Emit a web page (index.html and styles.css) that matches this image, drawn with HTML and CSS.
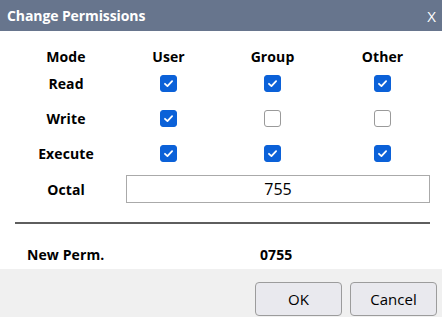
FILE: index.html
```html
<!DOCTYPE html>
<html>
<head>
<meta charset="utf-8">
<link rel="stylesheet" href="styles.css">
</head>
<body>
<div class="dialog">
  <div class="titlebar">
    <span class="title">Change Permissions</span>
    <span class="close">X</span>
  </div>
  <div class="content">
    <div class="grid">
      <div class="cell head">Mode</div>
      <div class="cell head">User</div>
      <div class="cell head">Group</div>
      <div class="cell head">Other</div>

      <div class="cell label">Read</div>
      <div class="cell"><span class="cb on"><svg viewBox="0 0 17 17"><path d="M4.5 8.8 L7.3 11.5 L12.6 5.8" /></svg></span></div>
      <div class="cell"><span class="cb on"><svg viewBox="0 0 17 17"><path d="M4.5 8.8 L7.3 11.5 L12.6 5.8" /></svg></span></div>
      <div class="cell"><span class="cb on"><svg viewBox="0 0 17 17"><path d="M4.5 8.8 L7.3 11.5 L12.6 5.8" /></svg></span></div>

      <div class="cell label">Write</div>
      <div class="cell"><span class="cb on"><svg viewBox="0 0 17 17"><path d="M4.5 8.8 L7.3 11.5 L12.6 5.8" /></svg></span></div>
      <div class="cell"><span class="cb"></span></div>
      <div class="cell"><span class="cb"></span></div>

      <div class="cell label">Execute</div>
      <div class="cell"><span class="cb on"><svg viewBox="0 0 17 17"><path d="M4.5 8.8 L7.3 11.5 L12.6 5.8" /></svg></span></div>
      <div class="cell"><span class="cb on"><svg viewBox="0 0 17 17"><path d="M4.5 8.8 L7.3 11.5 L12.6 5.8" /></svg></span></div>
      <div class="cell"><span class="cb on"><svg viewBox="0 0 17 17"><path d="M4.5 8.8 L7.3 11.5 L12.6 5.8" /></svg></span></div>

      <div class="cell label">Octal</div>
      <div class="octal-field"><div class="input">755</div></div>
    </div>
    <div class="rule"></div>
    <div class="result">
      <span class="result-label">New Perm.</span>
      <span class="result-value">0755</span>
    </div>
  </div>
  <div class="footer">
    <button class="btn">OK</button>
    <button class="btn">Cancel</button>
  </div>
</div>
</body>
</html>
```
FILE: styles.css
```css
html, body {
  margin: 0;
  padding: 0;
  background: #ffffff;
}
body {
  font-family: "Open Sans", "Noto Sans", sans-serif;
  color: #000;
  width: 442px;
  height: 317px;
  overflow: hidden;
}
.dialog {
  display: flex;
  flex-direction: column;
  height: 317px;
}
.titlebar {
  height: 31px;
  flex: none;
  background: #67758d;
  color: #fff;
  display: flex;
  align-items: center;
  justify-content: space-between;
  padding: 0 6px 0 7px;
}
.title {
  font-weight: 700;
  font-size: 14px;
  letter-spacing: -0.1px;
}
.close {
  font-size: 15px;
  font-weight: 400;
}
.content {
  flex: none;
  height: 238px;
  box-sizing: border-box;
  padding: 13px 12px 0 15px;
}
.grid {
  display: grid;
  grid-template-columns: 102px 103px 105px 115px;
  grid-template-rows: 24px 30px 40px 30px 42px;
  align-items: center;
}
.cell {
  display: flex;
  justify-content: center;
  align-items: center;
}
.head, .label {
  font-weight: 700;
  font-size: 14px;
  letter-spacing: 0.1px;
}
.cb {
  width: 15px;
  height: 15px;
  border: 1px solid #9a9a9a;
  border-radius: 3px;
  background: #fff;
  display: flex;
}
.cb.on {
  background: #0b61d8;
  border-color: #0b61d8;
}
.cb svg {
  width: 15px;
  height: 15px;
}
.cb path {
  fill: none;
  stroke: #fff;
  stroke-width: 2;
  stroke-linecap: round;
  stroke-linejoin: round;
}
.octal-field {
  grid-column: 2 / 5;
  padding-left: 9px;
}
.input {
  height: 26px;
  border: 1px solid #aaaaaa;
  display: flex;
  align-items: center;
  justify-content: center;
  font-size: 16px;
  width: 302px;
}
.rule {
  height: 2px;
  margin-top: 12px;
  width: 415px;
  background: #5e5e5e;
}
.result {
  display: flex;
  align-items: center;
  height: 30px;
  padding-top: 15px;
  font-weight: 700;
  font-size: 14px;
  letter-spacing: 0.1px;
}
.result-label {
  width: 102px;
  padding-left: 12px;
  box-sizing: border-box;
}
.result-value {
  padding-left: 143px;
}
.footer {
  height: 48px;
  flex: none;
  background: #f0f0f0;
  display: flex;
  justify-content: flex-end;
  align-items: flex-start;
  padding: 13px 5px 0 0;
  gap: 8px;
  box-sizing: border-box;
}
.btn {
  width: 87px;
  height: 34px;
  background: #e9e9ee;
  border: 1px solid #9c9c9c;
  border-radius: 4px;
  font-family: "Open Sans", "Noto Sans", sans-serif;
  font-size: 15px;
  color: #000;
  padding: 0;
}
```
